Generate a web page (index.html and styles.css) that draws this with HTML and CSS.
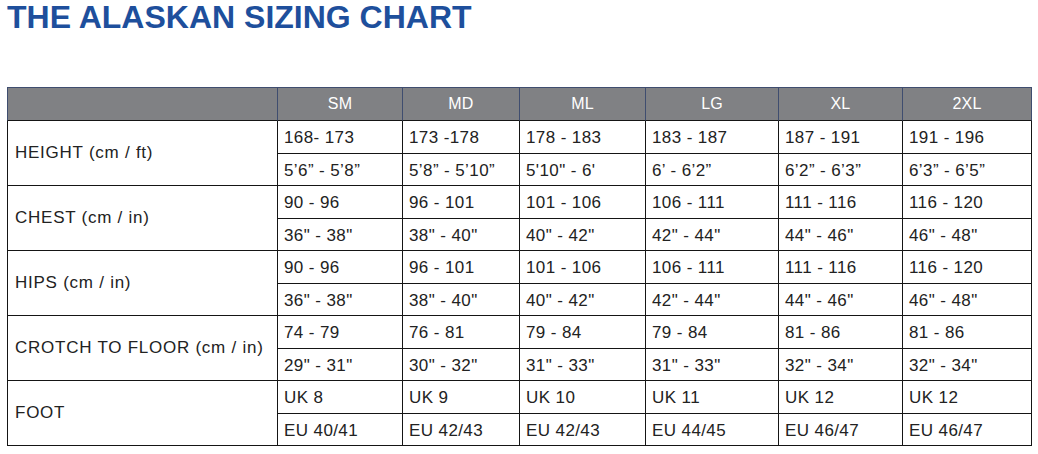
FILE: index.html
```html
<!DOCTYPE html>
<html>
<head>
<meta charset="utf-8">
<link rel="stylesheet" href="styles.css">
</head>
<body>
<h1 class="title">THE ALASKAN SIZING CHART</h1>
<table class="chart">
  <colgroup>
    <col class="c-label">
    <col class="c-sm">
    <col class="c-md">
    <col class="c-ml">
    <col class="c-lg">
    <col class="c-xl">
    <col class="c-2xl">
  </colgroup>
  <thead>
    <tr class="head">
      <th class="first"></th>
      <th>SM</th><th>MD</th><th>ML</th><th>LG</th><th>XL</th><th>2XL</th>
    </tr>
  </thead>
  <tbody>
    <tr class="r-a">
      <td class="label" rowspan="2">HEIGHT (cm / ft)</td>
      <td>168- 173</td><td>173 -178</td><td>178 - 183</td><td>183 - 187</td><td>187 - 191</td><td>191 - 196</td>
    </tr>
    <tr class="r-b">
      <td>5’6” - 5’8”</td><td>5’8” - 5’10”</td><td>5'10" - 6'</td><td>6’ - 6’2”</td><td>6’2” - 6’3”</td><td>6’3” - 6’5”</td>
    </tr>
    <tr class="r-a">
      <td class="label" rowspan="2">CHEST (cm / in)</td>
      <td>90 - 96</td><td>96 - 101</td><td>101 - 106</td><td>106 - 111</td><td>111 - 116</td><td>116 - 120</td>
    </tr>
    <tr class="r-b">
      <td>36" - 38"</td><td>38" - 40"</td><td>40" - 42"</td><td>42" - 44"</td><td>44" - 46"</td><td>46" - 48"</td>
    </tr>
    <tr class="r-a">
      <td class="label" rowspan="2">HIPS (cm / in)</td>
      <td>90 - 96</td><td>96 - 101</td><td>101 - 106</td><td>106 - 111</td><td>111 - 116</td><td>116 - 120</td>
    </tr>
    <tr class="r-b">
      <td>36" - 38"</td><td>38" - 40"</td><td>40" - 42"</td><td>42" - 44"</td><td>44" - 46"</td><td>46" - 48"</td>
    </tr>
    <tr class="r-a">
      <td class="label" rowspan="2">CROTCH TO FLOOR (cm / in)</td>
      <td>74 - 79</td><td>76 - 81</td><td>79 - 84</td><td>79 - 84</td><td>81 - 86</td><td>81 - 86</td>
    </tr>
    <tr class="r-b">
      <td>29" - 31"</td><td>30" - 32"</td><td>31" - 33"</td><td>31" - 33"</td><td>32" - 34"</td><td>32" - 34"</td>
    </tr>
    <tr class="r-a">
      <td class="label" rowspan="2">FOOT</td>
      <td>UK 8</td><td>UK 9</td><td>UK 10</td><td>UK 11</td><td>UK 12</td><td>UK 12</td>
    </tr>
    <tr class="r-b">
      <td>EU 40/41</td><td>EU 42/43</td><td>EU 42/43</td><td>EU 44/45</td><td>EU 46/47</td><td>EU 46/47</td>
    </tr>
  </tbody>
</table>
</body>
</html>
```
FILE: styles.css
```css
html, body {
  margin: 0;
  padding: 0;
  background: #ffffff;
}

body {
  font-family: "Liberation Sans", Arial, sans-serif;
  color: #222222;
}

.title {
  margin: 1px 0 0 0;
  padding-left: 7px;
  font-size: 32px;
  line-height: 32px;
  font-weight: bold;
  color: #1e4f9c;
}

.chart {
  margin: 54px 0 0 7px;
  border-collapse: separate;
  border-spacing: 0;
  table-layout: fixed;
  width: 1025px;
}

.c-label { width: 271px; }
.c-sm { width: 125px; }
.c-md { width: 117px; }
.c-ml { width: 126px; }
.c-lg { width: 133px; }
.c-xl { width: 124px; }
.c-2xl { width: 129px; }

.chart th,
.chart td {
  box-sizing: border-box;
  border-right: 1px solid #151515;
  border-bottom: 1px solid #151515;
  padding: 2px 0 0 6px;
  font-size: 17px;
  letter-spacing: 0.4px;
  text-align: left;
  vertical-align: middle;
  white-space: nowrap;
}

.head {
  height: 34px;
}

.chart th {
  background: #808184;
  color: #ffffff;
  font-weight: normal;
  font-size: 16px;
  letter-spacing: 0.2px;
  text-align: center;
  padding: 0;
  border-top: 1px solid #3f4d6f;
  border-right-color: #3f4d6f;
}

.chart th.first {
  border-left: 1px solid #3f4d6f;
}

.chart td.label {
  border-left: 1px solid #151515;
  padding-left: 7px;
  padding-top: 0;
  letter-spacing: 0.75px;
}

.r-a { height: 33px; }
.r-b { height: 32px; }
```
